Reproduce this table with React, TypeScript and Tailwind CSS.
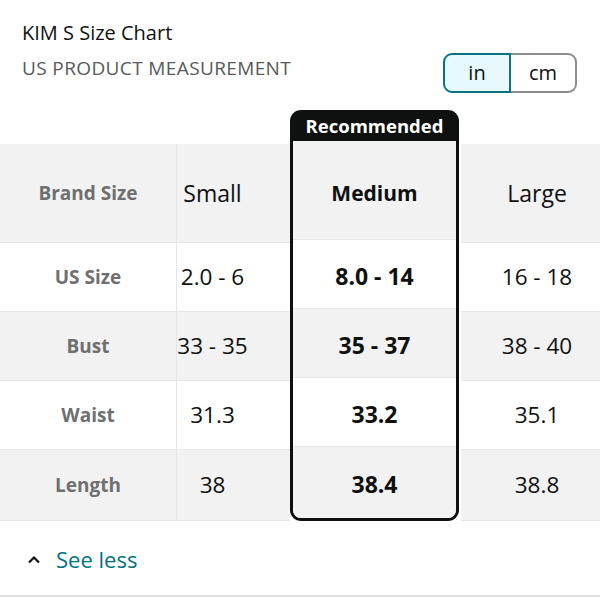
import React from 'react';

const font = { fontFamily: '"Open Sans", "Noto Sans", sans-serif' };

type Row = { label: string; small: string; medium: string; large: string; h: string; gray: boolean };

const rows: Row[] = [
  { label: 'Brand Size', small: 'Small', medium: 'Medium', large: 'Large', h: 'h-[99px]', gray: true },
  { label: 'US Size', small: '2.0 - 6', medium: '8.0 - 14', large: '16 - 18', h: 'h-[69px]', gray: false },
  { label: 'Bust', small: '33 - 35', medium: '35 - 37', large: '38 - 40', h: 'h-[69px]', gray: true },
  { label: 'Waist', small: '31.3', medium: '33.2', large: '35.1', h: 'h-[69px]', gray: false },
  { label: 'Length', small: '38', medium: '38.4', large: '38.8', h: 'h-[71px]', gray: true },
];

const Cell = ({ row, children, className }: { row: Row; children: React.ReactNode; className?: string }) => (
  <div
    className={`${row.h} flex items-center justify-center border-b border-[#e6e6e6] whitespace-nowrap ${row.gray ? 'bg-[#f2f2f2]' : 'bg-white'} ${className || ''}`}
  >
    {children}
  </div>
);

export default function App() {
  return (
    <div className="w-[600px] h-[600px] bg-white overflow-hidden text-[#0f1111]" style={font}>
      {/* Header */}
      <div className="flex justify-between pl-[22px] pr-[23px] pt-[20px]">
        <div>
          <div className="text-[20px] leading-[26px]">KIM S Size Chart</div>
          <div className="text-[19px] leading-[26px] mt-[9px] tracking-[0.02em] text-[#565959]">US PRODUCT MEASUREMENT</div>
        </div>
        <div className="flex mt-[33px] h-[40px] text-[20px]">
          <div className="w-[68px] flex items-center justify-center bg-[#e8f9fb] border-2 border-[#0b7285] rounded-l-[9px]">in</div>
          <div className="w-[66px] flex items-center justify-center bg-white border-2 border-l-0 border-[#8d8d8d] rounded-r-[9px]">cm</div>
        </div>
      </div>

      {/* Table */}
      <div className="flex items-end mt-[17px]">
        {/* labels */}
        <div className="w-[177px] border-r border-[#e6e6e6]">
          {rows.map((r) => (
            <Cell key={r.label} row={r} className="text-[19px] font-bold text-[#6f6f6f]">
              {r.label}
            </Cell>
          ))}
        </div>
        {/* small */}
        <div className="w-[113px]">
          {rows.map((r, i) => (
            <Cell key={r.label} row={r} className={`pr-[42px] ${i === 0 ? 'text-[23px]' : 'text-[22.5px]'}`}>
              {r.small}
            </Cell>
          ))}
        </div>
        {/* medium */}
        <div className="w-[169px] flex flex-col">
          <div className="h-[31px] bg-[#0f1111] rounded-t-[11px] text-white font-bold text-[18.5px] flex items-center justify-center">
            Recommended
          </div>
          <div className="border-x-[3px] border-b-[3px] border-[#0f1111] rounded-b-[11px] overflow-hidden">
            {rows.map((r, i) => (
              <Cell
                key={r.label}
                row={r}
                className={`font-bold ${i === 0 ? 'text-[21px] pt-[7px]' : 'text-[23px] pt-[4px]'} ${i === rows.length - 1 ? 'h-[68px] border-b-0' : ''}`}
              >
                {r.medium}
              </Cell>
            ))}
          </div>
        </div>
        {/* large */}
        <div className="flex-1 pl-[2px]">
          {rows.map((r, i) => (
            <Cell key={r.label} row={r} className={`pl-[13px] ${i === 0 ? 'text-[23px]' : 'text-[22.5px]'}`}>
              {r.large}
            </Cell>
          ))}
        </div>
      </div>

      {/* See less */}
      <div className="h-[76px] flex items-center pt-[3px] pl-[27px] border-b-2 border-[#dedede]">
        <svg width="14" height="10" viewBox="0 0 14 10" className="mr-[15px]">
          <path d="M2 7.5 L7 2.5 L12 7.5" fill="none" stroke="#0f1111" strokeWidth="2.2" />
        </svg>
        <span className="text-[22px] text-[#007185]">See less</span>
      </div>
    </div>
  );
}
